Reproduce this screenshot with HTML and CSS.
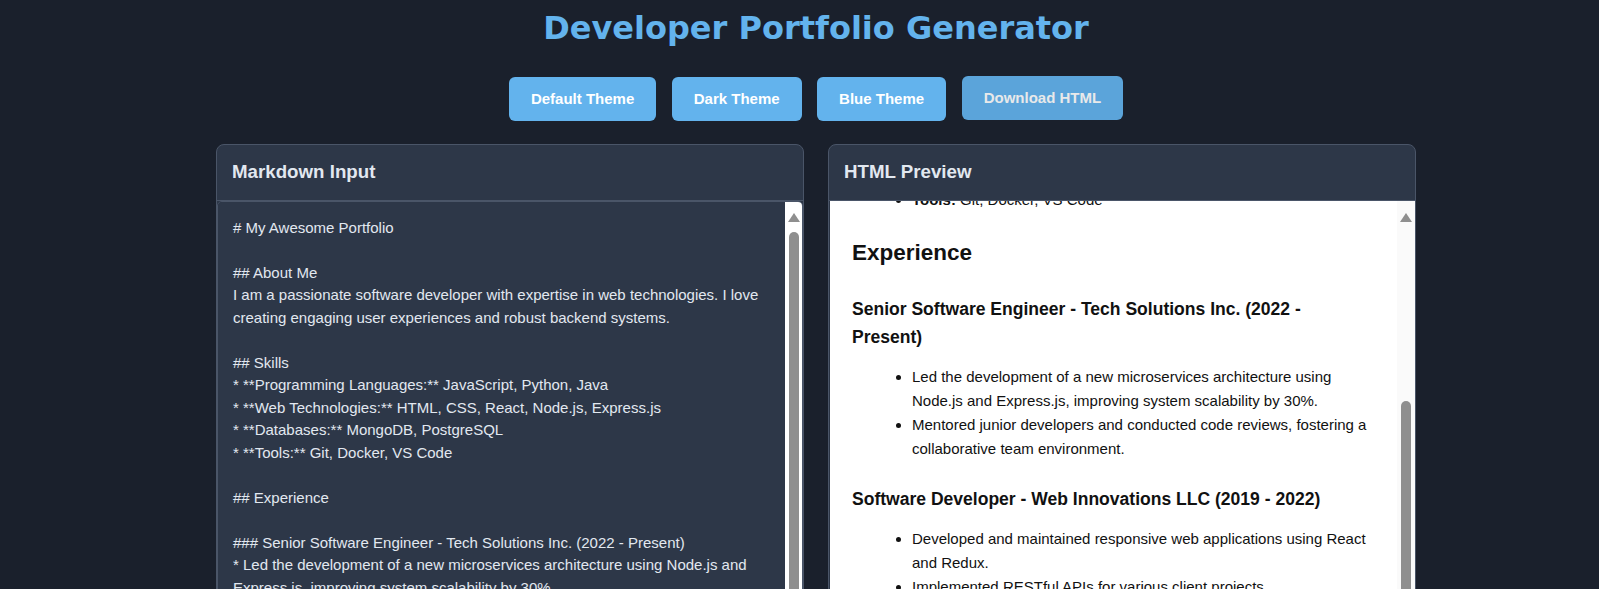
FILE: index.html
```html
<!DOCTYPE html>
<html lang="en">
<head>
<meta charset="utf-8">
<title>Developer Portfolio Generator</title>
<link rel="stylesheet" href="styles.css">
</head>
<body>
<div class="app">
  <h1 class="title">Developer Portfolio Generator</h1>
  <div class="toolbar">
    <button class="btn">Default Theme</button>
    <button class="btn">Dark Theme</button>
    <button class="btn">Blue Theme</button>
    <button class="btn btn-download">Download HTML</button>
  </div>
  <div class="panels">
    <section class="panel">
      <h3 class="panel-header">Markdown Input</h3>
      <div class="editor-box">
        <textarea class="editor" spellcheck="false"># My Awesome Portfolio

## About Me
I am a passionate software developer with expertise in web technologies. I love creating engaging user experiences and robust backend systems.

## Skills
* **Programming Languages:** JavaScript, Python, Java
* **Web Technologies:** HTML, CSS, React, Node.js, Express.js
* **Databases:** MongoDB, PostgreSQL
* **Tools:** Git, Docker, VS Code

## Experience

### Senior Software Engineer - Tech Solutions Inc. (2022 - Present)
* Led the development of a new microservices architecture using Node.js and Express.js, improving system scalability by 30%.
* Mentored junior developers and conducted code reviews, fostering a collaborative team environment.

### Software Developer - Web Innovations LLC (2019 - 2022)
* Developed and maintained responsive web applications using React and Redux.
* Implemented RESTful APIs for various client projects.

## Education

### B.S. in Computer Science - State University (2015 - 2019)

## Projects

### Portfolio Generator
A tool that converts Markdown into a styled HTML portfolio.

## Contact
* Email: developer@example.com
* GitHub: github.com/developer</textarea>
        <div class="scrollbar scrollbar-editor" aria-hidden="true">
          <span class="sb-arrow"></span>
          <span class="sb-thumb sb-thumb-editor"></span>
        </div>
      </div>
    </section>
    <section class="panel">
      <h3 class="panel-header">HTML Preview</h3>
      <div class="preview-box">
        <div class="preview" id="preview">
          <h1>My Awesome Portfolio</h1>
          <h2>About Me</h2>
          <p>I am a passionate software developer with expertise in web technologies. I love creating engaging user experiences and robust backend systems.</p>
          <h2>Skills</h2>
          <ul>
            <li><strong>Programming Languages:</strong> JavaScript, Python, Java</li>
            <li><strong>Web Technologies:</strong> HTML, CSS, React, Node.js, Express.js</li>
            <li><strong>Databases:</strong> MongoDB, PostgreSQL</li>
            <li><strong>Tools:</strong> Git, Docker, VS Code</li>
          </ul>
          <h2 id="experience">Experience</h2>
          <h3>Senior Software Engineer - Tech Solutions Inc. (2022 - Present)</h3>
          <ul>
            <li>Led the development of a new microservices architecture using Node.js and Express.js, improving system scalability by 30%.</li>
            <li>Mentored junior developers and conducted code reviews, fostering a collaborative team environment.</li>
          </ul>
          <h3>Software Developer - Web Innovations LLC (2019 - 2022)</h3>
          <ul>
            <li>Developed and maintained responsive web applications using React and Redux.</li>
            <li>Implemented RESTful APIs for various client projects.</li>
          </ul>
          <h2>Education</h2>
          <h3>B.S. in Computer Science - State University (2015 - 2019)</h3>
          <h2>Projects</h2>
          <h3>Portfolio Generator</h3>
          <p>A tool that converts Markdown into a styled HTML portfolio.</p>
          <h2>Contact</h2>
          <ul>
            <li>Email: developer@example.com</li>
            <li>GitHub: github.com/developer</li>
          </ul>
        </div>
        <div class="scrollbar scrollbar-preview" aria-hidden="true">
          <span class="sb-arrow"></span>
          <span class="sb-thumb sb-thumb-preview"></span>
        </div>
      </div>
    </section>
  </div>
</div>
<script src="script.js"></script>
</body>
</html>
```
FILE: styles.css
```css
html, body {
  margin: 0;
  background: #1a202c;
}

body {
  font-family: "Liberation Sans", Arial, sans-serif;
  padding: 10px 0 0 33px;
}

.app {
  max-width: 1200px;
  margin: 0 auto;
}

.title {
  margin: 0;
  font-family: "DejaVu Sans", sans-serif;
  font-weight: bold;
  font-size: 32px;
  line-height: 37px;
  text-align: center;
  color: #63b3ed;
}

.toolbar {
  display: flex;
  justify-content: center;
  gap: 15.5px;
  margin-top: 29.5px;
}

.btn {
  font-family: "Liberation Sans", Arial, sans-serif;
  font-weight: bold;
  font-size: 15px;
  line-height: 18px;
  padding: 13px 22px;
  color: #ffffff;
  background: #63b3ed;
  border: 0;
  border-radius: 6px;
  cursor: pointer;
}

.btn-download {
  opacity: 0.9;
  transform: translateY(-1px);
}

.panels {
  display: grid;
  grid-template-columns: 1fr 1fr;
  gap: 24px;
  margin-top: 23px;
}

.panel {
  display: flex;
  flex-direction: column;
  background: #2d3748;
  border: 1px solid #4a5568;
  border-radius: 8px;
  overflow: hidden;
}

.panel-header {
  margin: 0;
  padding: 16.5px 15px;
  font-size: 18.72px;
  line-height: 22px;
  font-weight: bold;
  color: #e2e8f0;
  border-bottom: 1px solid #4a5568;
}

.editor-box {
  display: flex;
  height: 600px;
  border: 1px solid #4a5568;
  border-radius: 5px;
  overflow: hidden;
}

.editor {
  display: block;
  flex: 1;
  min-width: 0;
  box-sizing: border-box;
  margin: 0;
  padding: 15px;
  border: 0;
  background: #2d3748;
  color: #e2e8f0;
  font-family: "Liberation Sans", Arial, sans-serif;
  font-size: 15px;
  line-height: 1.5;
  resize: none;
  outline: none;
  overflow: hidden;
}

.preview-box {
  display: flex;
  height: 600px;
  margin-left: 1px;
  background: #ffffff;
}

.preview {
  flex: 1;
  min-width: 0;
  box-sizing: border-box;
  overflow: hidden;
  padding: 0 28px 0 22px;
  background: #ffffff;
  color: #111111;
  font-size: 15px;
  line-height: 1.6;
}

.preview h1 {
  font-size: 30px;
  margin: 20px 0 12px;
}

.preview h2 {
  font-size: 22.5px;
  margin: 23px 0 12px;
}

.preview h3 {
  font-size: 17.55px;
  margin: 24px 0 14px;
}

.preview p {
  margin: 14px 0 15px;
}

.preview ul {
  margin: 14px 0 15px;
  padding-left: 60px;
}

.scrollbar {
  flex: none;
  display: flex;
  flex-direction: column;
  align-items: center;
  width: 17px;
  background: #ffffff;
}

.scrollbar-editor {
  padding-top: 11px;
}

.scrollbar-preview {
  width: 18px;
  padding-top: 12px;
  background: #fafafa;
}

.sb-arrow {
  width: 0;
  height: 0;
  border-left: 6px solid transparent;
  border-right: 6px solid transparent;
  border-bottom: 9px solid #8f8f8f;
}

.sb-thumb {
  display: block;
  width: 10px;
  border-radius: 5px;
  background: #8f8f8f;
}

.sb-thumb-editor {
  margin-top: 10px;
  height: 520px;
}

.sb-thumb-preview {
  margin-top: 179px;
  height: 300px;
}
```
FILE: script.js
```js
(function () {
  var preview = document.getElementById('preview');
  var target = document.getElementById('experience');
  var pTop = preview.getBoundingClientRect().top;
  var tTop = target.getBoundingClientRect().top;
  preview.scrollTop = tTop - pTop - 34;
})();
```
